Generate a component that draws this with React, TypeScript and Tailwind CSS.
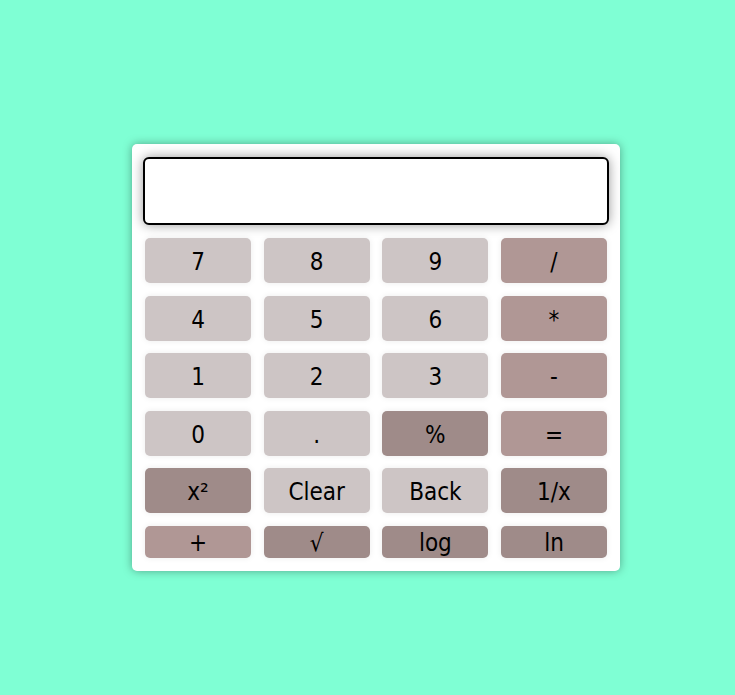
const light = 'bg-[#cdc5c5]';
const op = 'bg-[#b09795]';
const dark = 'bg-[#9f8b89]';

const rows: { label: string; tone: string }[][] = [
  [
    { label: '7', tone: light },
    { label: '8', tone: light },
    { label: '9', tone: light },
    { label: '/', tone: op },
  ],
  [
    { label: '4', tone: light },
    { label: '5', tone: light },
    { label: '6', tone: light },
    { label: '*', tone: op },
  ],
  [
    { label: '1', tone: light },
    { label: '2', tone: light },
    { label: '3', tone: light },
    { label: '-', tone: op },
  ],
  [
    { label: '0', tone: light },
    { label: '.', tone: light },
    { label: '%', tone: dark },
    { label: '=', tone: op },
  ],
  [
    { label: 'x²', tone: dark },
    { label: 'Clear', tone: light },
    { label: 'Back', tone: light },
    { label: '1/x', tone: dark },
  ],
];

const lastRow = [
  { label: '+', tone: op },
  { label: '√', tone: dark },
  { label: 'log', tone: dark },
  { label: 'ln', tone: dark },
];

export default function App() {
  return (
    <div
      className="min-h-screen w-full bg-[#7fffd4] flex items-center justify-center pt-[20px] pl-[17px]"
      style={{ fontFamily: '"DejaVu Sans Condensed", "DejaVu Sans", sans-serif' }}>
      <div className="w-[488px] bg-white rounded-[5px] shadow-[0_0_10px_rgba(0,0,0,0.35)] px-[11px] pt-[13px] pb-[13px]">
        {/* Display */}
        <input
          type="text"
          readOnly
          className="block w-full h-[68px] border-2 border-black rounded-[6px] bg-white shadow-[0_0_12px_rgba(0,0,0,0.4)] outline-none"
        />

        {/* Keys */}
        <div className="grid grid-cols-4 gap-x-[12.7px] gap-y-[12.6px] mt-[13px] mx-[2px]">
          {rows.flat().map((k) => (
            <button
              key={k.label}
              className={`${k.tone} h-[45px] pt-[3px] rounded-[5px] text-[24px] leading-none text-black shadow-[0_0_6px_rgba(0,0,0,0.08)]`}>
              {k.label}
            </button>
          ))}
          {lastRow.map((k) => (
            <button
              key={k.label}
              className={`${k.tone} h-[32px] pt-[3px] rounded-[5px] text-[24px] leading-none text-black shadow-[0_0_6px_rgba(0,0,0,0.08)]`}>
              {k.label}
            </button>
          ))}
        </div>
      </div>
    </div>
  );
}
